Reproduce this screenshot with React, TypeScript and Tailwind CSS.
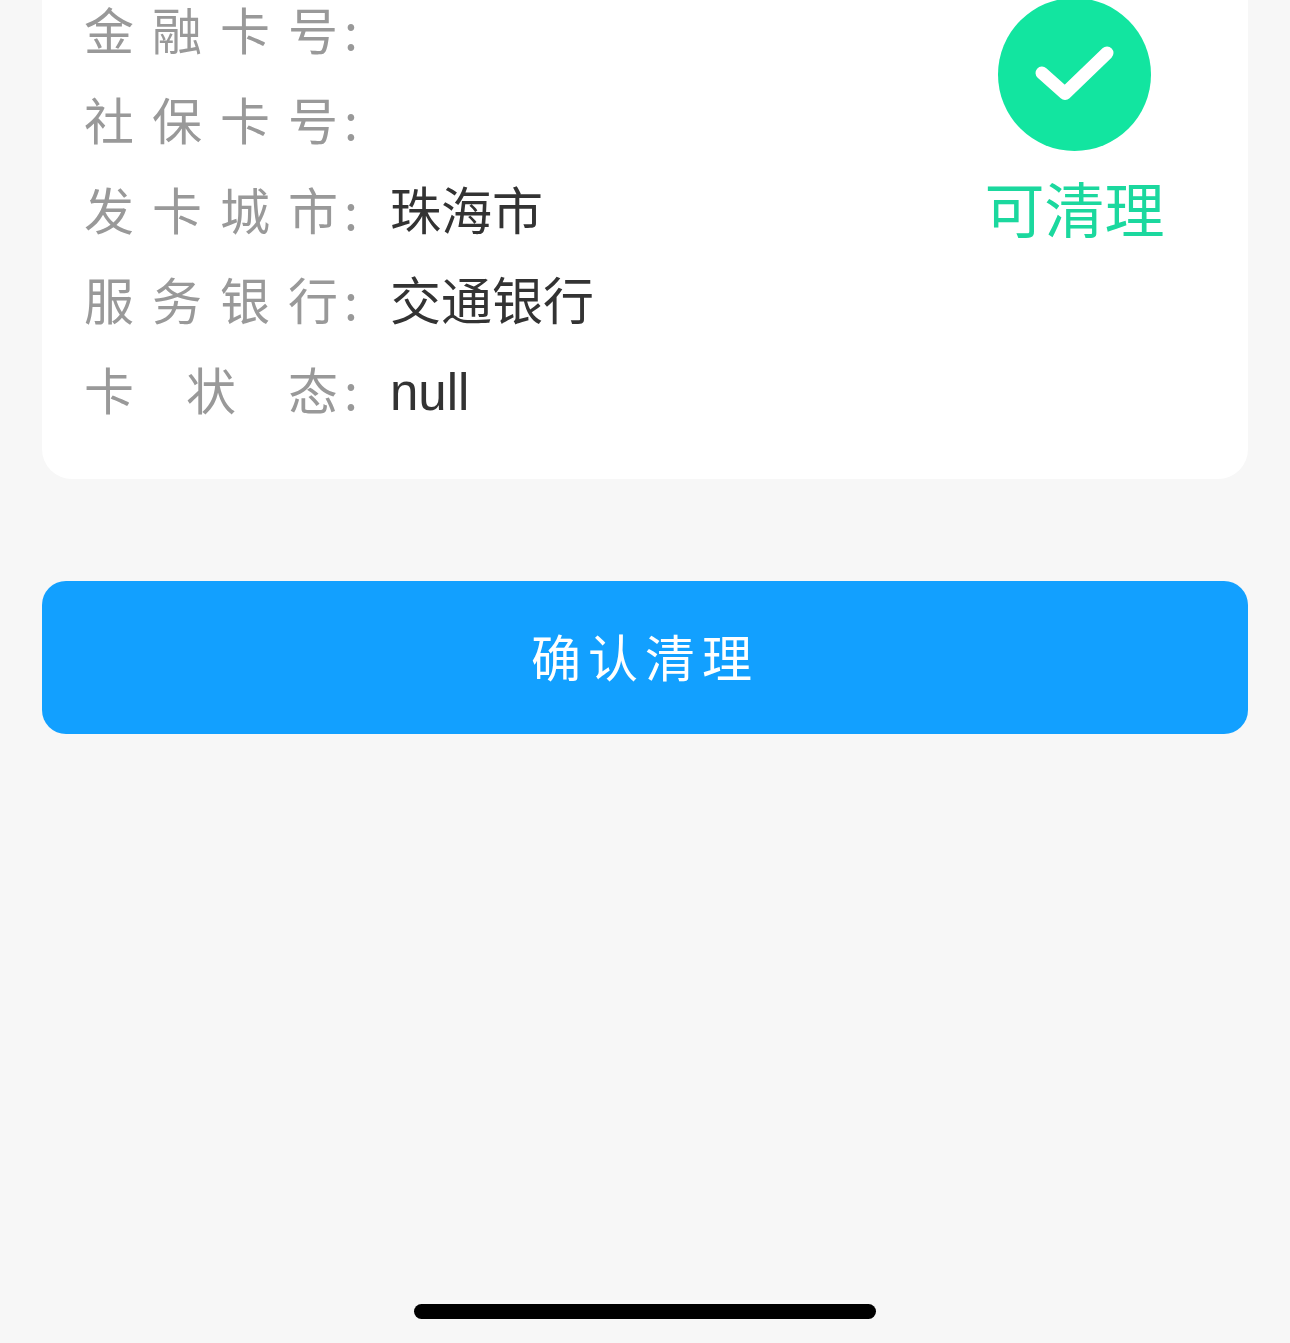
const font = { fontFamily: '"Liberation Sans", "Noto Sans CJK SC", sans-serif' };
const cjk = { fontFamily: '"Noto Sans CJK SC", sans-serif' };

function Row({ label, value }: { label: string[]; value?: string }) {
  return (
    <div className="flex h-[90px] items-center">
      <div className="flex w-[254px] justify-between text-[#999999]" style={cjk}>
        {label.map((c, i) => (
          <span key={i}>{c}</span>
        ))}
      </div>
      <span className="w-[52px] pl-[6px] text-[#999999]" style={cjk}>:</span>
      <span className="pt-[9px] text-[51px] text-[#333333]" style={font}>{value}</span>
    </div>
  );
}

export default function App() {
  return (
    <div
      className="flex h-[1343px] w-full flex-col overflow-hidden bg-[#f7f7f7] px-[42px] text-[50px] leading-[90px]"
      style={font}
    >
      <div className="mt-[-17px] flex h-[496px] shrink-0 justify-between rounded-b-[30px] bg-white pl-[42px] pr-[97px]">
        <div className="flex flex-col">
          <Row label={["金", "融", "卡", "号"]} />
          <Row label={["社", "保", "卡", "号"]} />
          <Row label={["发", "卡", "城", "市"]} value="珠海市" />
          <Row label={["服", "务", "银", "行"]} value="交通银行" />
          <Row label={["卡", "状", "态"]} value="null" />
        </div>
        <div className="flex w-[153px] flex-col items-center pt-[15px]">
          <svg className="shrink-0" width="153" height="153" viewBox="0 0 153 153">
            <circle cx="76.5" cy="76.5" r="76.5" fill="#12E5A0" />
            <path d="M44 75 L67 95.5 L109 55" fill="none" stroke="#ffffff" strokeWidth="13" strokeLinecap="round" strokeLinejoin="round" />
          </svg>
          <span className="mt-[11px] whitespace-nowrap text-[60px] leading-[90px] text-[#1BD89E]" style={cjk}>可清理</span>
        </div>
      </div>
      <button className="mt-[102px] flex h-[153px] shrink-0 items-center justify-center rounded-[24px] bg-[#12A0FF] pb-[5px] text-[50px] tracking-[7px] text-white" style={cjk}>
        确认清理
      </button>
      <div className="mt-[570px] h-[15px] w-[462px] shrink-0 self-center rounded-full bg-black" />
    </div>
  );
}
